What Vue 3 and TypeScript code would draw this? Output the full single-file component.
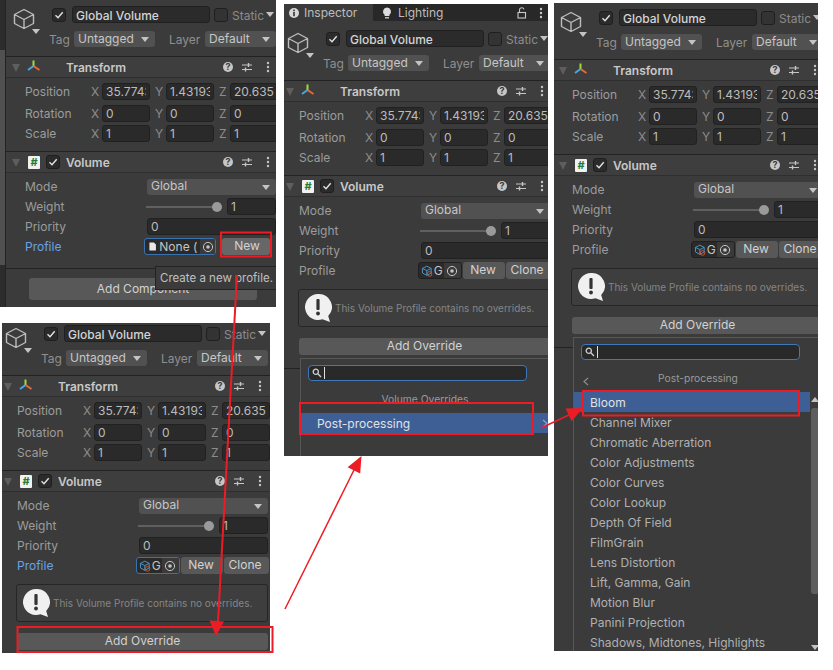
<script setup lang="ts">
interface Panel {
  id: string
  tabs: boolean
  hasProfile: boolean
  profileActive: boolean
  popup: '' | 'root' | 'post'
}

const panels: Panel[] = [
  { id: 'p1', tabs: false, hasProfile: false, profileActive: true, popup: '' },
  { id: 'p2', tabs: true, hasProfile: true, profileActive: false, popup: 'root' },
  { id: 'p3', tabs: false, hasProfile: true, profileActive: false, popup: 'post' },
  { id: 'p4', tabs: false, hasProfile: true, profileActive: true, popup: '' },
]

const vectors = [
  { label: 'Position', cls: 'first', v: ['35.7743', '1.43193', '20.6352'] },
  { label: 'Rotation', cls: 'second', v: ['0', '0', '0'] },
  { label: 'Scale', cls: '', v: ['1', '1', '1'] },
]
const axes = ['X', 'Y', 'Z']

const effects = [
  'Bloom', 'Channel Mixer', 'Chromatic Aberration', 'Color Adjustments', 'Color Curves',
  'Color Lookup', 'Depth Of Field', 'FilmGrain', 'Lens Distortion', 'Lift, Gamma, Gain',
  'Motion Blur', 'Panini Projection', 'Shadows, Midtones, Highlights',
]
</script>

<template>
  <div class="canvas">
    <section v-for="p in panels" :key="p.id" class="panel" :class="p.id">
      <div v-if="p.tabs" class="tabs">
        <div class="tab on">
          <svg width="12" height="12" viewBox="0 0 12 12"><circle cx="6" cy="6" r="5" fill="#d8d8d8" /><rect x="5.2" y="5" width="1.6" height="4.2" fill="#333" /><rect x="5.2" y="2.6" width="1.6" height="1.6" fill="#333" /></svg>
          <span>Inspector</span>
        </div>
        <div class="tab off">
          <svg width="10" height="12" viewBox="0 0 10 12"><path d="M5 0.5a4 4 0 0 1 2.4 7.2V9H2.6V7.700A4 4 0 0 1 5 .5Z" fill="#dcdcdc" /><rect x="3" y="10" width="4" height="1.500" fill="#bdbdbd" /></svg>
          <span>Lighting</span>
          <div class="tab-tools">
            <svg width="10" height="12" viewBox="0 0 10 12" fill="none" stroke="#c8c8c8" stroke-width="1.100"><rect x="1" y="5.500" width="7.500" height="5.500" /><path d="M2.500 5.500V3a2.300 2.300 0 0 1 4.500-.6" /></svg>
            <svg width="4" height="12" viewBox="0 0 4 12" fill="#c8c8c8"><circle cx="2" cy="2" r="1.200" /><circle cx="2" cy="6" r="1.200" /><circle cx="2" cy="10" r="1.200" /></svg>
          </div>
        </div>
      </div>

      <div class="inner">
        <header class="go">
          <div class="go-icon">
            <svg width="22" height="22" viewBox="0 0 22 22" fill="none" stroke="#bdbdbd" stroke-width="1.400" stroke-linejoin="round"><path d="M11 1.500 20.500 6.500V15.500L11 20.500 1.500 15.500V6.500ZM1.500 6.500 11 11.500 20.500 6.500M11 11.500V20.500" /></svg>
            <i class="tri go-tri"></i>
          </div>
          <div class="go-rows">
            <div class="go-row one">
              <span class="check"><svg width="10" height="10" viewBox="0 0 10 10" fill="none" stroke="#e4e4e4" stroke-width="1.400"><path d="M1.500 5.300 4 7.700 8.700 2.300" /></svg></span>
              <span class="name">Global Volume</span>
              <span class="check static"></span>
              <span class="static-label">Static</span>
              <i class="tri static-tri"></i>
            </div>
            <div class="go-row two">
              <span class="lab tag-lab">Tag</span>
              <span class="drop untagged">Untagged<i class="tri"></i></span>
              <span class="lab layer-lab">Layer</span>
              <span class="drop layer">Default<i class="tri"></i></span>
            </div>
          </div>
        </header>

        <div class="comp-head first-head">
          <i class="fold"></i>
          <span class="comp-icon">
            <svg width="13" height="12" viewBox="0 0 13 12" fill="none" stroke-width="2"><path d="M6.500 0.500V6" stroke="#9ade3a" /><path d="M6.500 6 1 10" stroke="#46a8e8" /><path d="M6.500 6 12.500 10" stroke="#e8683a" /></svg>
          </span>
          <b class="comp-title">Transform</b>
          <span class="comp-tools">
            <svg width="12" height="12" viewBox="0 0 12 12"><circle cx="6" cy="6" r="5" fill="#c6c6c6" /><text x="6" y="9" text-anchor="middle" class="qm">?</text></svg>
            <svg width="12" height="10" viewBox="0 0 12 10" stroke="#c6c6c6" stroke-width="1"><path d="M1 3h10M1 7.500h10" /><path d="M7.500 1v4M4.500 5.500v4" stroke-width="1.400" /></svg>
            <svg class="dots" width="4" height="12" viewBox="0 0 4 12" fill="#c6c6c6"><circle cx="2" cy="2" r="1.200" /><circle cx="2" cy="6" r="1.200" /><circle cx="2" cy="10" r="1.200" /></svg>
          </span>
        </div>
        <div class="vecs">
          <div v-for="r in vectors" :key="r.label" class="vec-row" :class="r.cls">
            <span class="row-label">{{ r.label }}</span>
            <template v-for="(a, i) in axes" :key="a">
              <span class="axis">{{ a }}</span>
              <span class="field vec-field"><span class="clip">{{ r.v[i] }}</span></span>
            </template>
          </div>
        </div>

        <div class="comp-head">
          <i class="fold"></i>
          <span class="doc">#</span>
          <span class="check vol-check"><svg width="10" height="10" viewBox="0 0 10 10" fill="none" stroke="#e4e4e4" stroke-width="1.400"><path d="M1.500 5.300 4 7.700 8.700 2.300" /></svg></span>
          <b class="comp-title vol-title">Volume</b>
          <span class="comp-tools">
            <svg width="12" height="12" viewBox="0 0 12 12"><circle cx="6" cy="6" r="5" fill="#c6c6c6" /><text x="6" y="9" text-anchor="middle" class="qm">?</text></svg>
            <svg width="12" height="10" viewBox="0 0 12 10" stroke="#c6c6c6" stroke-width="1"><path d="M1 3h10M1 7.500h10" /><path d="M7.500 1v4M4.500 5.500v4" stroke-width="1.400" /></svg>
            <svg class="dots" width="4" height="12" viewBox="0 0 4 12" fill="#c6c6c6"><circle cx="2" cy="2" r="1.200" /><circle cx="2" cy="6" r="1.200" /><circle cx="2" cy="10" r="1.200" /></svg>
          </span>
        </div>
        <div class="vol">
          <div class="prop">
            <span class="row-label wide">Mode</span>
            <span class="drop mode">Global<i class="tri"></i></span>
          </div>
          <div class="prop">
            <span class="row-label wide">Weight</span>
            <span class="slider"><i class="knob"></i></span>
            <span class="field weight"><span class="clip">1</span></span>
          </div>
          <div class="prop">
            <span class="row-label wide">Priority</span>
            <span class="field priority"><span class="clip">0</span></span>
          </div>
          <div class="prop">
            <span class="row-label profile-label" :class="{ active: p.profileActive }">Profile</span>
            <span v-if="!p.hasProfile" class="obj none active">
              <svg width="9" height="11" viewBox="0 0 9 11"><path d="M0.500 0.500H6L8.500 3V10.500H0.500Z" fill="#e8e8e8" /></svg>
              <span class="obj-text">None (</span>
              <span class="picker"><svg width="12" height="12" viewBox="0 0 12 12" fill="none" stroke="#c4c4c4"><circle cx="6" cy="6" r="4.600" /><circle cx="6" cy="6" r="1.800" fill="#c4c4c4" stroke="none" /></svg></span>
            </span>
            <span v-else class="obj some" :class="{ active: p.profileActive }">
              <svg width="12" height="12" viewBox="0 0 12 12" fill="none"><path d="M6 1 10.500 3.300V8L6 10.500 1.500 8V3.300ZM1.500 3.300 6 5.600 10.500 3.300M6 5.600V10.500" stroke="#4f97c4" /><circle cx="8.800" cy="9" r="2.400" stroke="#d8552a" /></svg>
              <span class="obj-text">G</span>
              <span class="picker"><svg width="12" height="12" viewBox="0 0 12 12" fill="none" stroke="#c4c4c4"><circle cx="6" cy="6" r="4.600" /><circle cx="6" cy="6" r="1.800" fill="#c4c4c4" stroke="none" /></svg></span>
            </span>
            <span v-if="!p.hasProfile" class="btn new hover">New</span>
            <template v-else>
              <span class="btn new">New</span>
              <span class="btn clone">Clone</span>
            </template>
          </div>
        </div>

        <template v-if="!p.hasProfile">
          <div class="add-comp"><span class="btn big">Add Component</span></div>
        </template>
        <template v-else>
          <div class="help">
            <svg width="28" height="30" viewBox="0 0 28 30"><path d="M14 1a13 13 0 1 0 4.500 25.200L26 29l-1.800-6A13 13 0 0 0 14 1Z" fill="#f0f0f0" /><rect x="12.400" y="6" width="3.200" height="11" rx="1" fill="#333" /><circle cx="14" cy="20.500" r="1.900" fill="#333" /></svg>
            <span>This Volume Profile contains no overrides.</span>
          </div>
          <div class="override"><span class="btn over">Add Override</span></div>
        </template>

        <div v-if="p.popup" class="popup">
          <div class="search">
            <svg width="10" height="10" viewBox="0 0 10 10" fill="none" stroke="#d0d0d0" stroke-width="1.300"><circle cx="3.800" cy="3.800" r="2.600" /><path d="M5.800 5.800 9 9" /></svg>
            <i class="caret"></i>
          </div>
          <div class="pop-title">
            <svg v-if="p.popup === 'post'" class="back" width="6" height="9" viewBox="0 0 6 9" fill="none" stroke="#8c8c8c" stroke-width="1.200"><path d="M5 1 1 4.500 5 8" /></svg>
            {{ p.popup === 'post' ? 'Post-processing' : 'Volume Overrides' }}
          </div>
          <div v-if="p.popup === 'root'" class="pop-list">
            <div class="item sel">
              Post-processing
              <svg class="more" width="6" height="9" viewBox="0 0 6 9" fill="none" stroke="#8fa6cc" stroke-width="1.200"><path d="M1 1 5 4.500 1 8" /></svg>
            </div>
          </div>
          <div v-else class="pop-body">
            <div class="pop-list">
              <div v-for="(e, i) in effects" :key="e" class="item" :class="{ sel: i === 0 }">{{ e }}</div>
            </div>
            <div class="scroll">
              <i class="tri up"></i>
              <i class="thumb"></i>
              <i class="tri down"></i>
            </div>
          </div>
        </div>
      </div>

      <div v-if="p.id === 'p1'" class="tooltip">Create a new profile.</div>
    </section>

    <svg class="marks" width="833" height="670" viewBox="0 0 833 670" fill="none" stroke="#ed1c24">
      <rect x="221" y="232.500" width="50" height="24" stroke-width="2" />
      <rect x="300" y="403" width="233" height="31" stroke-width="2" />
      <rect x="583" y="391" width="216" height="24.500" stroke-width="2" />
      <rect x="17.500" y="627" width="255" height="25" stroke-width="2" />
      <path d="M237 275 218 622" stroke-width="2" />
      <path d="M285 609 354 470" stroke-width="1.500" />
      <path d="M541 428 569 415" stroke-width="1.500" />
      <g fill="#ed1c24" stroke="none">
        <path d="M216 636 209.500 620.500 224 621.500Z" />
        <path d="M361.500 456 360.200 473.400 347.600 467.200Z" />
        <path d="M583 408 571.600 421.200 565.600 408.600Z" />
      </g>
    </svg>
  </div>
</template>

<style>
html, body { margin: 0; background: #fff; }
</style>

<style scoped>
.canvas {
  position: relative;
  width: 833px;
  height: 670px;
  overflow: hidden;
  background: #fff;
  font: 12px/16px Inter, "Noto Sans", sans-serif;
  color: #a6a6a6;
}
.panel {
  position: absolute;
  overflow: hidden;
  background: #3b3b3b;
}
.p1 { left: 0; top: 0; width: 276px; height: 307px; }
.p2 { left: 284px; top: 4px; width: 264px; height: 452px; }
.p3 { left: 554px; top: 3px; width: 264px; height: 648px; }
.p4 { left: 2px; top: 323px; width: 268px; height: 330px; }

.inner { position: relative; width: 300px; }
.p2 .inner { margin: 3px 0 0 -10px; }
.p3 .inner { margin-left: -7px; }
.p4 .inner { margin: -4px 0 0 -10px; }
.p1 .inner::before {
  content: "";
  position: absolute;
  z-index: 2;
  left: 0;
  top: 0;
  width: 5px;
  height: 307px;
  border-right: 1px solid #232323;
  background: linear-gradient(#2c2c2c 50px, #505050 50px 265px, #2c2c2c 265px);
}

.tabs { display: flex; height: 17px; background: #282828; }
.tab { display: flex; align-items: center; height: 17px; font-size: 12px; color: #bdbdbd; }
.tab.on { width: 89px; padding-left: 4px; gap: 4px; box-sizing: border-box; background: #3b3b3b; }
.tab.off { flex: 1; padding-left: 9px; gap: 6px; }
.tab-tools { display: flex; align-items: center; gap: 12px; margin-left: auto; padding-right: 5px; }

.go { display: flex; height: 57px; box-sizing: border-box; padding: 6px 0 0 13px; border-bottom: 1px solid #222; }
.go-icon { position: relative; width: 39px; height: 24px; padding-top: 2px; }
.go-tri { position: absolute; left: 19px; top: 23px; }
.go-rows { display: flex; flex-direction: column; width: 226px; }
.go-row { display: flex; align-items: center; height: 17px; }
.go-row.two { margin-top: 8px; height: 16px; }

.tri {
  display: inline-block;
  width: 0;
  height: 0;
  border-left: 4px solid transparent;
  border-right: 4px solid transparent;
  border-top: 5px solid #c4c4c4;
}
.check {
  display: inline-flex;
  align-items: center;
  justify-content: center;
  box-sizing: border-box;
  flex: none;
  width: 14px;
  height: 14px;
  border: 1px solid #1f1f1f;
  border-radius: 3px;
  background: #2b2b2b;
}
.check.static { margin-left: 4px; background: #333; }
.name {
  box-sizing: border-box;
  flex: none;
  width: 138px;
  height: 17px;
  margin-left: 6px;
  padding-left: 3px;
  border: 1px solid #202020;
  border-radius: 3px;
  background: #2b2b2b;
  color: #d4d4d4;
  font-weight: 500;
  line-height: 17px;
}
.static-label { flex: none; margin-left: 4px; padding-top: 2px; color: #8c8c8c; }
.static-tri { flex: none; margin-left: 2px; }

.lab { flex: none; padding-top: 2px; color: #8f8f8f; }
.tag-lab { width: 25px; margin-left: -3px; }
.drop {
  position: relative;
  display: block;
  flex: none;
  box-sizing: border-box;
  height: 16px;
  padding-left: 4px;
  border-radius: 3px;
  background: #515151;
  color: #c6c6c6;
  line-height: 15px;
}
.drop .tri { position: absolute; right: 6px; top: 6px; }
.untagged { width: 81px; }
.layer-lab { width: 36px; margin-left: 14px; }
.layer { width: 71px; }

.comp-head {
  position: relative;
  display: flex;
  align-items: center;
  height: 20px;
  border-bottom: 1px solid #2f2f2f;
  background: #3e3e3e;
}
.fold {
  position: absolute;
  left: 12px;
  top: 7px;
  width: 0;
  height: 0;
  border-left: 4px solid transparent;
  border-right: 4px solid transparent;
  border-top: 8px solid #5e5e5e;
}
.comp-icon { position: absolute; left: 27px; top: 3px; display: flex; }
.doc {
  position: absolute;
  left: 28px;
  top: 4px;
  width: 12px;
  height: 13px;
  border-radius: 1px;
  background: #f2f2f2;
  color: #1f7a35;
  font-size: 11px;
  font-weight: 700;
  line-height: 13px;
  text-align: center;
}
.vol-check { position: absolute; left: 46px; top: 3px; }
.comp-title { margin-left: 66px; padding-top: 2px; color: #c8c8c8; font-weight: 600; }
.vol-title { font-weight: 600; }
.comp-tools { position: absolute; left: 222px; top: 4px; display: flex; align-items: center; gap: 7px; height: 12px; }
.dots { margin-left: 6px; }
.qm { font: 700 9px Inter, sans-serif; fill: #3b3b3b; }

.vecs { height: 74px; box-sizing: border-box; padding-top: 5px; border-bottom: 1px solid #232323; }
.vec-row { display: flex; align-items: center; height: 17px; padding-left: 25px; margin-bottom: 3px; }
.vec-row.first { margin-bottom: 5px; }
.row-label { flex: none; width: 66px; color: #9c9c9c; }
.row-label.wide { width: 122px; }
.profile-label { width: 119px; }
.profile-label.active { color: #6ba1e8; }
.axis { flex: none; width: 11px; color: #8c8c8c; }
.vec-field { width: 48px; margin-right: 5px; }
.vec-row .vec-field:last-child { margin-right: 0; }

.field {
  display: block;
  box-sizing: border-box;
  flex: none;
  height: 17px;
  padding: 0 3px;
  border: 1px solid #212121;
  border-radius: 3px;
  background: #2a2a2a;
  color: #bcbcbc;
  line-height: 15px;
}
.clip { display: block; overflow: hidden; white-space: nowrap; }

.vol { padding: 5px 0 0 25px; }
.prop { display: flex; align-items: center; height: 17px; margin-bottom: 3px; }
.mode { width: 129px; line-height: 14px; }
.slider { position: relative; display: block; flex: none; width: 72px; height: 2px; margin: 0 0 0 -1px; background: #606060; }
.knob { position: absolute; right: -4px; top: -4px; width: 10px; height: 10px; border-radius: 50%; background: #9a9a9a; }
.weight { width: 49px; margin-left: 9px; }
.priority { width: 129px; }

.obj {
  display: flex;
  align-items: center;
  flex: none;
  box-sizing: border-box;
  height: 17px;
  padding-left: 4px;
  border: 1px solid #202020;
  border-radius: 3px;
  background: #2a2a2a;
  color: #c4c4c4;
  overflow: hidden;
}
.obj.active { border-color: #3a72b0; }
.obj.none { width: 72px; gap: 3px; }
.obj.some { width: 44px; gap: 1px; padding-left: 2px; }
.obj-text { white-space: nowrap; }
.picker {
  display: flex;
  align-items: center;
  justify-content: center;
  width: 18px;
  height: 15px;
  margin-left: auto;
  background: #3a3a3a;
}
.btn {
  display: block;
  flex: none;
  box-sizing: border-box;
  height: 17px;
  border-radius: 3px;
  background: #585858;
  color: #d2d2d2;
  line-height: 16px;
  text-align: center;
}
.new { width: 42px; margin-left: 1px; padding-right: 2px; }
.new.hover { width: 48px; margin-left: 6px; padding-right: 0; padding-left: 2px; background: #676767; }
.clone { width: 45px; margin-left: 1px; padding-right: 3px; }

.add-comp { margin-top: 13px; padding: 9px 0 0 29px; border-top: 1px solid #232323; }
.big { width: 228px; height: 22px; line-height: 22px; }

.help {
  display: flex;
  align-items: center;
  box-sizing: border-box;
  width: 252px;
  height: 38px;
  margin: 10px 0 0 24px;
  padding-left: 5px;
  border: 1px solid #262626;
  border-radius: 3px;
  background: #3e3e3e;
  color: #858585;
  font-size: 10px;
  white-space: nowrap;
}
.help svg { flex: none; }
.help span { margin-left: 3px; }
.override { margin-top: 11px; padding: 0 0 13px 25px; border-bottom: 1px solid #232323; }
.over { width: 251px; }

.popup {
  position: absolute;
  left: 26px;
  top: 334px;
  box-sizing: border-box;
  width: 256px;
  height: 320px;
  border: 1px solid #575757;
  border-right: 0;
  background: #3b3b3b;
}
.search {
  display: flex;
  align-items: center;
  box-sizing: border-box;
  width: 219px;
  height: 16px;
  margin: 6px 0 0 7px;
  padding-left: 3px;
  border: 1px solid #3f77b8;
  border-radius: 4px;
  background: #292929;
}
.caret { width: 1px; height: 12px; margin-left: 2px; background: #e0e0e0; }
.pop-title { position: relative; width: 248px; height: 32px; color: #9a9a9a; font-size: 10.300px; line-height: 36px; text-align: center; }
.back { position: absolute; left: 9px; top: 17px; }
.pop-body { display: flex; }
.pop-list { width: 100%; }
.pop-body .pop-list { width: 236px; flex: none; }
.item { position: relative; height: 20px; padding-left: 16px; color: #b0b0b0; line-height: 21px; }
.item.sel { background: #3e5f96; color: #e2e2e2; }
.more { position: absolute; left: 241px; top: 6px; }
.scroll { position: relative; flex: 1; }
.scroll .tri { position: absolute; left: 1px; }
.up { top: 5px; transform: rotate(180deg); }
.down { top: 253px; }
.thumb { position: absolute; left: 1px; top: 16px; width: 8px; height: 186px; border-radius: 3px; background: #5e5e5e; }

.tooltip {
  position: absolute;
  left: 155px;
  top: 266px;
  box-sizing: border-box;
  width: 125px;
  height: 24px;
  padding-left: 4px;
  border: 1px solid #232323;
  background: #3b3b3b;
  color: #c0c0c0;
  font-size: 11.500px;
  line-height: 22px;
  white-space: nowrap;
}
.marks { position: absolute; left: 0; top: 0; pointer-events: none; }
</style>
